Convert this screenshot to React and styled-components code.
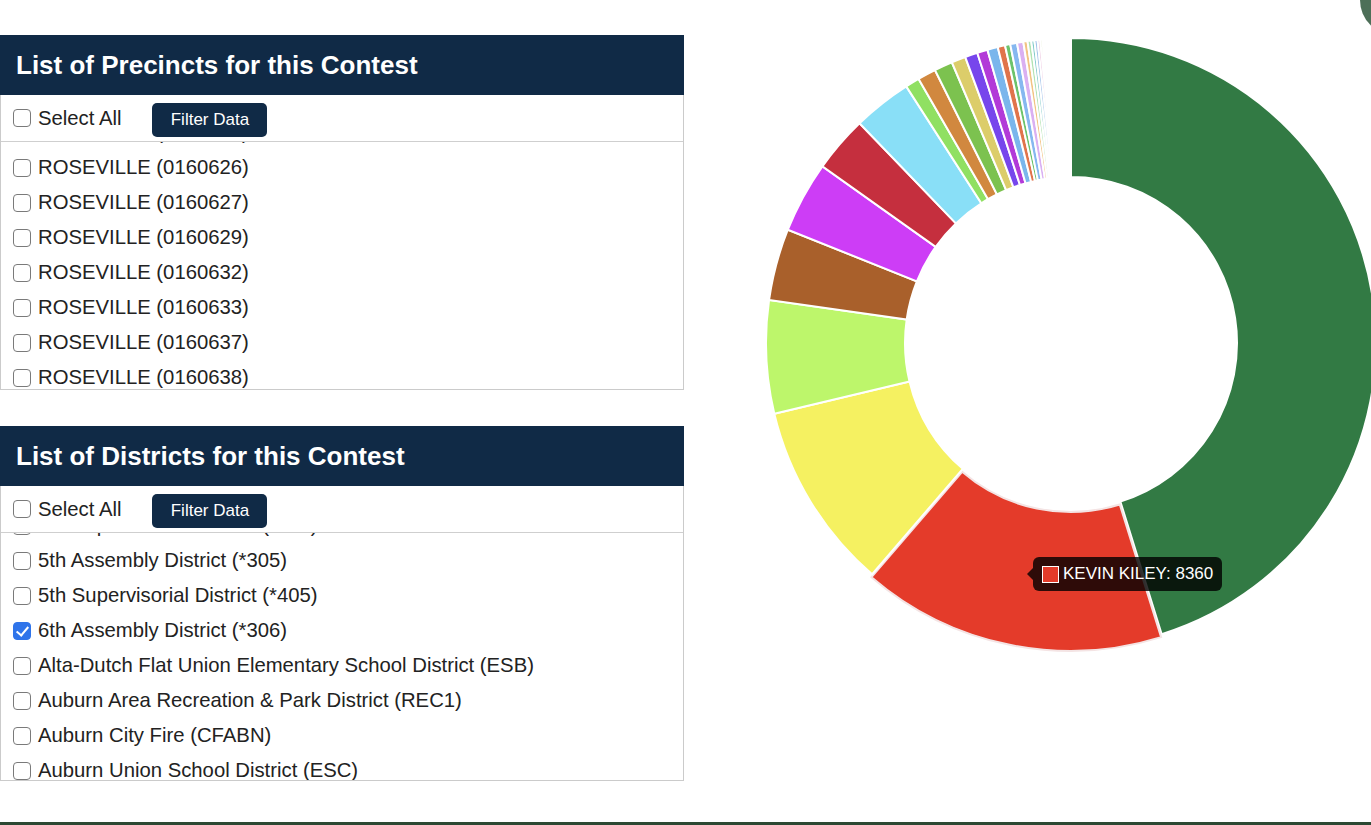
import React, { useLayoutEffect, useRef } from "react";
import styled, { createGlobalStyle } from "styled-components";

const GlobalStyle = createGlobalStyle`
    html, body {
        margin: 0;
        padding: 0;
        background: #ffffff;
        overflow: hidden;
    }
    body {
        font-family: "Liberation Sans", Arial, Helvetica, sans-serif;
        color: #222222;
    }
`;

const precincts = [
    "ROSEVILLE (0160622)",
    "ROSEVILLE (0160623)",
    "ROSEVILLE (0160625)",
    "ROSEVILLE (0160626)",
    "ROSEVILLE (0160627)",
    "ROSEVILLE (0160629)",
    "ROSEVILLE (0160632)",
    "ROSEVILLE (0160633)",
    "ROSEVILLE (0160637)",
    "ROSEVILLE (0160638)",
    "ROSEVILLE (0160639)",
    "ROSEVILLE (0160640)",
];

const districts = [
    "3rd Supervisorial District (*403)",
    "4th Assembly District (*304)",
    "4th Supervisorial District (*404)",
    "5th Assembly District (*305)",
    "5th Supervisorial District (*405)",
    "6th Assembly District (*306)",
    "Alta-Dutch Flat Union Elementary School District (ESB)",
    "Auburn Area Recreation & Park District (REC1)",
    "Auburn City Fire (CFABN)",
    "Auburn Union School District (ESC)",
    "Auburn Urban Development Authority (AUDA)",
    "Bean Road Community Services District (CSD2)",
];

// boundaries of each slice, in degrees clockwise from 12 o'clock
const bounds = [
    0, 162.7, 220.7, 256.6, 278.1, 291.8, 305.4, 316.1, 327.3, 330, 333.5, 337,
    339.7, 342.1, 344.1, 346.1, 347.5, 348.5, 349.8, 351, 351.8, 352.5, 353.1,
    353.7, 354.2, 354.6,
];

const colors = [
    "#327a44", "#e43b2a", "#f5f161", "#bdf66b", "#a9602b", "#cd3df6",
    "#c52f3e", "#89dff7", "#90e062", "#d1883f", "#7cc24f", "#dccd6a",
    "#7746ec", "#b23ad8", "#7ab6ec", "#e0744b", "#6cc36b", "#86b8f0",
    "#dab0f2", "#f2c383", "#b2e3b2", "#82caca", "#a3c2ea", "#e8b8d8",
    "#c8d8a0",
];

const HOVERED = 1;

const polar = (cx, cy, rad, deg) => {
    const a = (deg * Math.PI) / 180;
    return [cx + rad * Math.sin(a), cy - rad * Math.cos(a)];
};

const arcPath = (cx, cy, R, r, a0, a1) => {
    const large = a1 - a0 > 180 ? 1 : 0;
    const [x0, y0] = polar(cx, cy, R, a0);
    const [x1, y1] = polar(cx, cy, R, a1);
    const [x2, y2] = polar(cx, cy, r, a1);
    const [x3, y3] = polar(cx, cy, r, a0);
    return `M${x0} ${y0} A${R} ${R} 0 ${large} 1 ${x1} ${y1} L${x2} ${y2} A${r} ${r} 0 ${large} 0 ${x3} ${y3} Z`;
};

const CheckItem = ({ label, checked }) => (
    <Row>
        <Check type="checkbox" defaultChecked={checked} />
        <span>{label}</span>
    </Row>
);

const SelectPanel = ({ title, items, checkedItem, scroll }) => {
    const listRef = useRef(null);

    useLayoutEffect(() => {
        if (listRef.current) listRef.current.scrollTop = scroll;
    }, [scroll]);

    return (
        <Panel>
            <PanelHeader>{title}</PanelHeader>
            <Toolbar>
                <CheckItem label="Select All" />
                <FilterButton>Filter Data</FilterButton>
            </Toolbar>
            <List ref={listRef}>
                {items.map((item) => (
                    <CheckItem key={item} label={item} checked={item === checkedItem} />
                ))}
            </List>
        </Panel>
    );
};

const Donut = () => {
    const cx = 387;
    const cy = 308;
    return (
        <ChartSvg width="687" height="650" viewBox="0 0 687 650">
            {colors.map((c, i) => {
                const a0 = bounds[i];
                const a1 = bounds[i + 1];
                const hovered = i === HOVERED;
                const mid = ((a0 + a1) / 2) * (Math.PI / 180);
                const dx = hovered ? 3 * Math.sin(mid) : 0;
                const dy = hovered ? -3 * Math.cos(mid) : 0;
                return (
                    <path
                        key={i}
                        d={arcPath(cx, cy, 305, 166, a0, a1)}
                        fill={c}
                        stroke={hovered ? "#f4e4e4" : "#ffffff"}
                        strokeWidth="2"
                        transform={`translate(${dx} ${dy})`}
                    />
                );
            })}
        </ChartSvg>
    );
};

const App = () => {
    return (
        <Page>
            <GlobalStyle />
            <CornerFab />
            <Main>
                <LeftCol>
                    <SelectPanel
                        title="List of Precincts for this Contest"
                        items={precincts}
                        scroll={97}
                    />
                    <SelectPanel
                        title="List of Districts for this Contest"
                        items={districts}
                        checkedItem="6th Assembly District (*306)"
                        scroll={95}
                    />
                </LeftCol>
                <RightCol>
                    <Donut />
                    <Tooltip>
                        <Swatch $color="#e43b2a" />
                        <span>KEVIN KILEY: 8360</span>
                    </Tooltip>
                </RightCol>
            </Main>
            <Footer />
        </Page>
    );
};

export default App;

const Page = styled.div`
    position: relative;
    display: flex;
    flex-direction: column;
    height: 100vh;
    overflow: hidden;
`;

const CornerFab = styled.div`
    position: absolute;
    top: -35px;
    right: -59px;
    width: 70px;
    height: 70px;
    border-radius: 50%;
    background: #4d6f58;
`;

const Main = styled.div`
    flex: 1;
    display: flex;
    align-items: flex-start;
    padding-top: 35px;
`;

const LeftCol = styled.div`
    width: 684px;
    flex-shrink: 0;
    display: flex;
    flex-direction: column;
    gap: 36px;
`;

const Panel = styled.section`
    box-sizing: border-box;
    width: 684px;
    border: 1px solid #cbcbcb;
    border-top: none;
    background: #ffffff;
`;

const PanelHeader = styled.h2`
    margin: 0 -1px;
    height: 60px;
    display: flex;
    align-items: center;
    padding: 0 16px;
    background: #102a46;
    color: #ffffff;
    font-size: 26px;
    font-weight: 700;
`;

const Toolbar = styled.div`
    height: 46px;
    display: flex;
    align-items: center;
    gap: 31px;
    padding-left: 12px;
    border-bottom: 1px solid #cfcfcf;
`;

const FilterButton = styled.button`
    width: 115px;
    height: 34px;
    margin-top: 3px;
    border: none;
    border-radius: 5px;
    background: #102a46;
    color: #ffffff;
    font-family: "Liberation Sans", Arial, sans-serif;
    font-size: 17px;
    padding: 0;
    cursor: pointer;
`;

const List = styled.div`
    height: 247px;
    overflow-y: auto;
    padding-left: 12px;
    scrollbar-width: none;
    &::-webkit-scrollbar {
        display: none;
    }
`;

const Row = styled.label`
    height: 35px;
    display: flex;
    align-items: center;
    gap: 7px;
    font-size: 20.3px;
    color: #222222;
    white-space: nowrap;
`;

const Check = styled.input`
    appearance: none;
    -webkit-appearance: none;
    position: relative;
    box-sizing: border-box;
    width: 18px;
    height: 18px;
    margin: 0;
    flex-shrink: 0;
    border: 1px solid #7a7a7a;
    border-radius: 4px;
    background: #ffffff;
    &:checked {
        background: #2f74ea;
        border-color: #2f74ea;
    }
    &:checked::after {
        content: "";
        position: absolute;
        left: 5px;
        top: 1px;
        width: 5px;
        height: 10px;
        border: solid #ffffff;
        border-width: 0 2.5px 2.5px 0;
        transform: rotate(40deg);
    }
`;

const RightCol = styled.div`
    position: relative;
    flex: 1;
`;

const ChartSvg = styled.svg`
    display: block;
    overflow: visible;
`;

const Tooltip = styled.div`
    position: absolute;
    left: 349px;
    top: 522px;
    height: 34px;
    display: flex;
    align-items: center;
    gap: 4px;
    padding: 0 9px;
    border-radius: 6px;
    background: rgba(0, 0, 0, 0.8);
    color: #ffffff;
    font-size: 17px;
    white-space: nowrap;
    &::before {
        content: "";
        position: absolute;
        left: -6px;
        top: 50%;
        margin-top: -6px;
        border-style: solid;
        border-width: 6px 6px 6px 0;
        border-color: transparent rgba(0, 0, 0, 0.8) transparent transparent;
    }
`;

const Swatch = styled.span`
    box-sizing: border-box;
    width: 17px;
    height: 17px;
    border: 1.5px solid #ffffff;
    background: ${(p) => p.$color};
`;

const Footer = styled.div`
    height: 3px;
    background: #2c4833;
`;
